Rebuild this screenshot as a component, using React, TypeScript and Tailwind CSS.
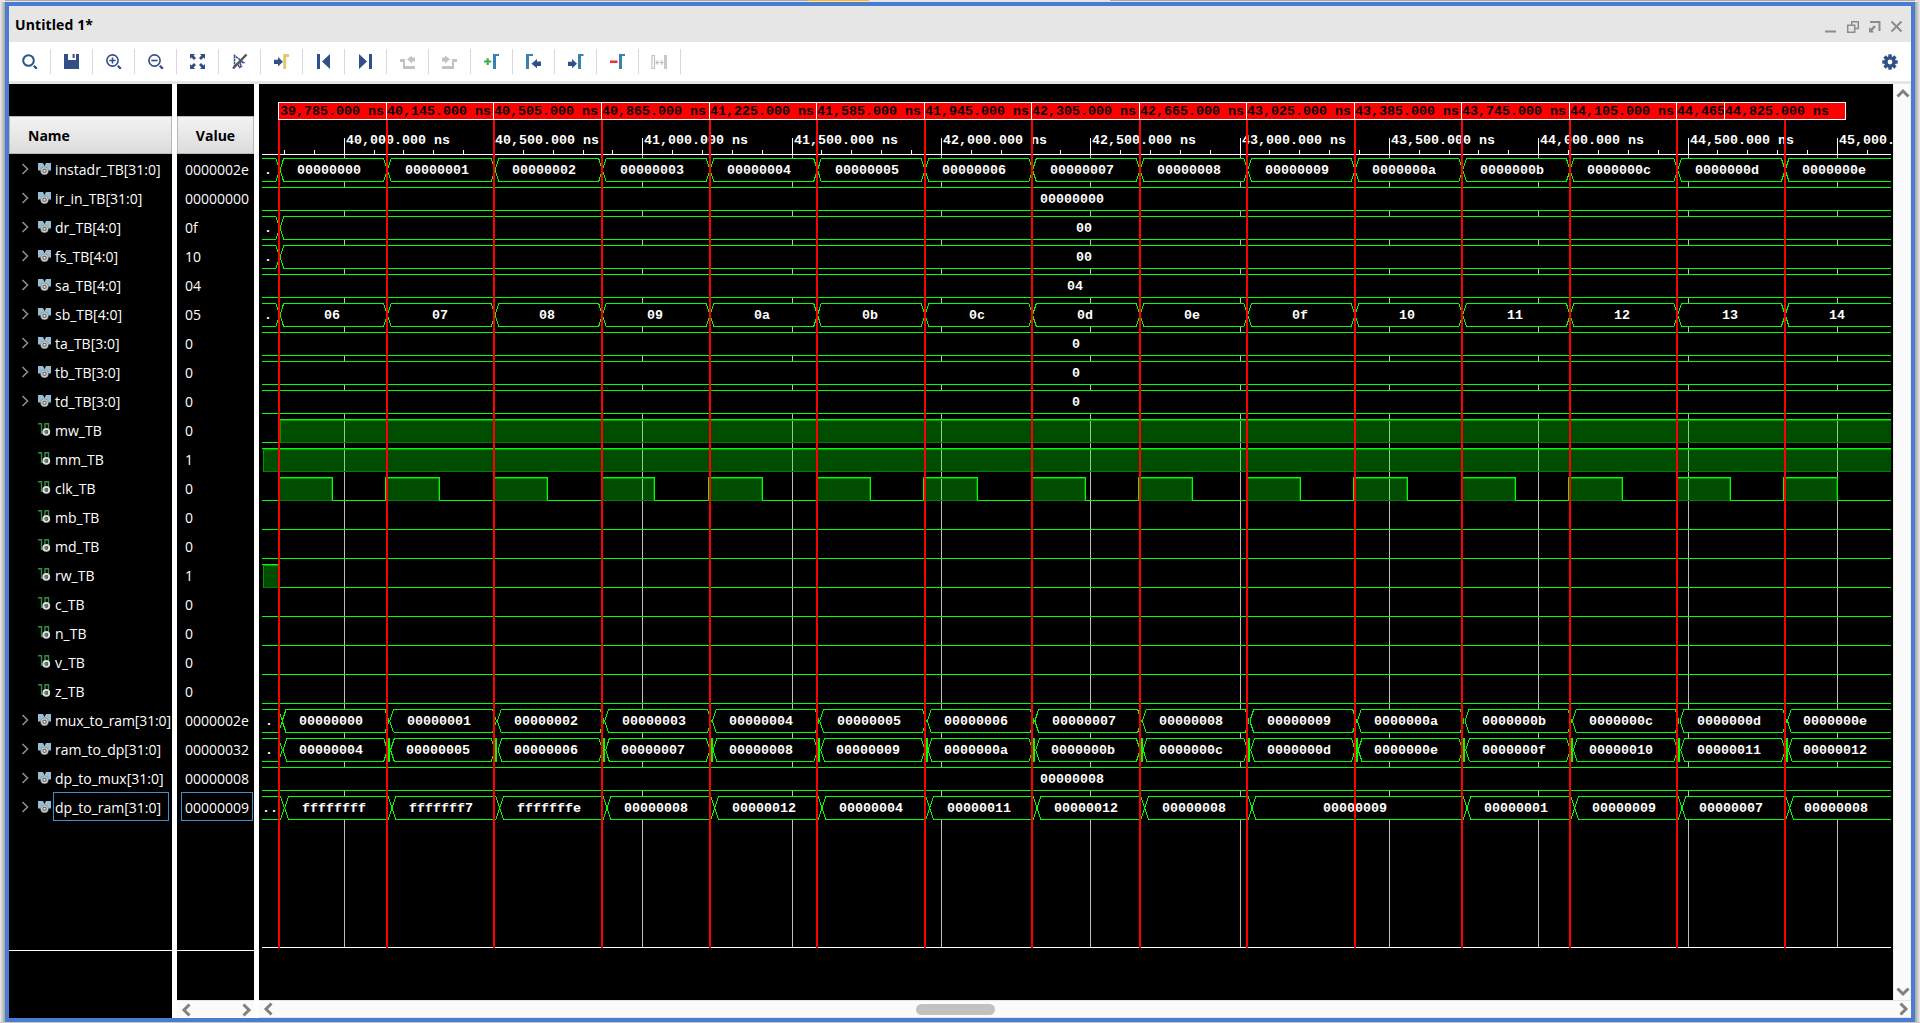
import React from "react";

const NAVY = "#334f87";
const GREEN = "#00ff00";

type Signal = { name: string; value: string; bus: boolean };

const signals: Signal[] = [
  { name: "instadr_TB[31:0]", value: "0000002e", bus: true },
  { name: "ir_in_TB[31:0]", value: "00000000", bus: true },
  { name: "dr_TB[4:0]", value: "0f", bus: true },
  { name: "fs_TB[4:0]", value: "10", bus: true },
  { name: "sa_TB[4:0]", value: "04", bus: true },
  { name: "sb_TB[4:0]", value: "05", bus: true },
  { name: "ta_TB[3:0]", value: "0", bus: true },
  { name: "tb_TB[3:0]", value: "0", bus: true },
  { name: "td_TB[3:0]", value: "0", bus: true },
  { name: "mw_TB", value: "0", bus: false },
  { name: "mm_TB", value: "1", bus: false },
  { name: "clk_TB", value: "0", bus: false },
  { name: "mb_TB", value: "0", bus: false },
  { name: "md_TB", value: "0", bus: false },
  { name: "rw_TB", value: "1", bus: false },
  { name: "c_TB", value: "0", bus: false },
  { name: "n_TB", value: "0", bus: false },
  { name: "v_TB", value: "0", bus: false },
  { name: "z_TB", value: "0", bus: false },
  { name: "mux_to_ram[31:0]", value: "0000002e", bus: true },
  { name: "ram_to_dp[31:0]", value: "00000032", bus: true },
  { name: "dp_to_mux[31:0]", value: "00000008", bus: true },
  { name: "dp_to_ram[31:0]", value: "00000009", bus: true },
];

/* ---------- toolbar icons (15 x 15) ---------- */

const Handle = () => <path d="M11 12.600l1.600-1.600 2.600 2.400v1.600h-1.800z" fill={NAVY} stroke="none" />;
const Corner = ({ c = "#3a80b0", x = 9 }: { c?: string; x?: number }) => (
  <path d={`M${x} 15V0h6v2h-3v13z`} fill={c} />
);

const icons: React.ReactNode[] = [
  <g fill="none" stroke={NAVY} strokeWidth="2">
    <circle cx="6.500" cy="6.500" r="5.300" />
    <Handle />
  </g>,
  <path d="M0 0h4v6h8V0h3v15H0zM8.600 0h2v4h-2z" fill={NAVY} />,
  <g fill="none" stroke={NAVY} strokeWidth="1.600">
    <circle cx="6.500" cy="6.500" r="5.600" />
    <path d="M3.400 6.500h6.200M6.500 3.400v6.200" />
    <Handle />
  </g>,
  <g fill="none" stroke={NAVY} strokeWidth="1.600">
    <circle cx="6.500" cy="6.500" r="5.600" />
    <path d="M3.400 6.500h6.200" />
    <Handle />
  </g>,
  <path
    d="M0 0h5L3.600 1.400 6 4 4 6 1.400 3.600 0 5zM15 0h-5l1.400 1.400L9 4l2 2 2.600-2.400L15 5zM0 15h5l-1.400-1.400L6 11 4 9l-2.600 2.400L0 10zM15 15h-5l1.400-1.400L9 11l2-2 2.600 2.400L15 10z"
    fill={NAVY}
  />,
  <g fill="none">
    <path d="M2.500 1.500v10l3-2 2 4 2-1-2-4h4z" stroke={NAVY} strokeWidth="1.500" strokeDasharray="2.500 .5" />
    <path d="M14.500 .5l-13.500 14" stroke="#555" strokeWidth="2.400" />
  </g>,
  <g>
    <path d="M0 5.700h4V3l5 4.800-5 4.700V10H0z" fill={NAVY} />
    <path d="M9.300 15V0H15v3h-3v12z" fill="#e3c766" />
  </g>,
  <path d="M1 0h3v15H1zM14 0v15L6 7.500z" fill={NAVY} />,
  <path d="M11 0h3v15h-3zM1 0v15l8-7.500z" fill={NAVY} />,
  <path d="M0 5h5v7h10v3H3V8H0zM7 5.300l5-3.800v2h3v4h-3v2z" fill="#c2c2c2" />,
  <path d="M15 5h-5v7H0v3h12V8h3zM8 5.300L3 1.500v2H0v4h3v2z" fill="#c2c2c2" />,
  <g>
    <path d="M2.600 4.200h2.200v2.400h2.400v2H4.800v2.400H2.600V8.600H0v-2h2.600z" fill="#3fae49" />
    <Corner />
  </g>,
  <g>
    <path d="M0 15V0h7v2H3v13z" fill="#3a80b0" />
    <path d="M15 7.500h-4V5l-5.500 4.700 5.500 4.500V12h4z" fill={NAVY} />
  </g>,
  <g>
    <path d="M0 7.800h4V5l5 4.700-5 4.500V12H0z" fill={NAVY} />
    <path d="M10 15V0h5.500v2H13v13z" fill="#3a80b0" />
  </g>,
  <g>
    <path d="M0 6.500h7.500V9H0z" fill="#ee2f36" />
    <Corner />
  </g>,
  <g fill="none" stroke="#c2c2c2">
    <path d="M0 1.500h2.500v13H0z" strokeWidth="1.200" />
    <path d="M12 1h3v14h-3z" fill="#c8c8c8" stroke="none" />
    <path d="M4.500 8.500h6M6 6.500l-2 2 2 2M9 6.500l2 2-2 2" strokeWidth="1.200" />
  </g>,
];

const Gear = () => (
  <svg width="16" height="16" viewBox="-8 -8 16 16" fill={NAVY}>
    {[0, 45, 90, 135].map((a) => (
      <rect key={a} x="-1.700" y="-7.700" width="3.400" height="15.400" transform={`rotate(${a})`} />
    ))}
    <circle r="5.800" />
    <circle r="2.400" fill="#fff" />
  </svg>
);

const Chevron = ({ d, c = "#808080", w = 3 }: { d: string; c?: string; w?: number }) => (
  <svg width="14" height="14" viewBox="0 0 14 14" fill="none" stroke={c} strokeWidth={w} className="shrink-0">
    <path d={d} />
  </svg>
);
const LEFT = "M9.500 1.500L4 7l5.500 5.500";
const RIGHT = "M4.500 1.500L10 7l-5.500 5.500";
const UP = "M1.500 9.500L7 4l5.500 5.500";
const DOWN = "M1.500 4.500L7 10l5.500-5.500";

const BusIcon = () => (
  <svg width="13" height="12" viewBox="0 0 13 12" className="shrink-0">
    <path d="M0 0h5l1.500 3L8 0h5v7.500H9V9H4V7.500H0z" fill="#96bdd2" />
    <circle cx="6.500" cy="7.800" r="3.900" fill="#d4d4d4" stroke="#5a6a74" strokeWidth=".5" />
    <circle cx="6.500" cy="7.800" r="1.700" fill="#e0e0e0" stroke="#666" strokeWidth="1.100" />
  </svg>
);
const WireIcon = () => (
  <svg width="13" height="13" viewBox="0 0 13 13" className="shrink-0">
    <path d="M0 .7h3.500v9.500h3.500V.7h3.500V6" fill="none" stroke="#2f8f45" strokeWidth="1.400" />
    <circle cx="8.300" cy="8.800" r="2.900" fill="none" stroke="#dcdcdc" strokeWidth="2" />
    <circle cx="8.300" cy="8.800" r="1.600" fill="#777" />
  </svg>
);

/* ---------- waveform ---------- */

const X0 = 262;
const X1 = 1891;
const markers = [278, 386, 493, 601, 709, 816, 924, 1031, 1139, 1246, 1354, 1461, 1569, 1676, 1784];
const markerLabels = [
  "39,785", "40,145", "40,505", "40,865", "41,225", "41,585", "41,945", "42,305",
  "42,665", "43,025", "43,385", "43,745", "44,105", "44,465", "44,825",
];
const clockRises = [278, 385, 493, 601, 708, 816, 923, 1031, 1138, 1246, 1353, 1461, 1568, 1676, 1783];
const majors = [
  "40,000", "40,500", "41,000", "41,500", "42,000", "42,500", "43,000", "43,500", "44,000", "44,500", "45,000",
];
const tickX = (n: number) => Math.floor(344.15 + 29.864 * n);
const top = (row: number) => 158 + 29 * row;

type Seg = { a: number; b: number; text: string; first?: boolean; last?: boolean };

const every = (start: number, labels: string[], endStart = start): Seg[] =>
  labels.map((text, i) => ({
    a: start + 107.52 * i,
    b: i === labels.length - 1 ? X1 : endStart + 107.52 * (i + 1),
    text,
    last: i === labels.length - 1,
  }));

const hex = (n: number, w: number) => n.toString(16).padStart(w, "0");
const counts = (from: number, w: number) => Array.from({ length: 15 }, (_, i) => hex(from + i, w));

const dpSegs: Seg[] = [
  ["ffffffff", 0, 1], ["fffffff7", 1, 2], ["fffffffe", 2, 3], ["00000008", 3, 4], ["00000012", 4, 5],
  ["00000004", 5, 6], ["00000011", 6, 7], ["00000012", 7, 8], ["00000008", 8, 9], ["00000009", 9, 11],
  ["00000001", 11, 12], ["00000009", 12, 13], ["00000007", 13, 14], ["00000008", 14, 15],
].map(([text, i, j]) => ({
  a: 284.6 + 107.5 * (i as number),
  b: j === 15 ? X1 : 284.6 + 107.5 * (j as number),
  text: text as string,
  last: j === 15,
}));

const whole = (text: string): Seg[] => [{ a: X0, b: X1, text, first: true, last: true }];
const afterStart = (text: string): Seg[] => [{ a: 280, b: X1, text, last: true }];

const busRows: { row: number; lead?: string; leadEnd?: number; segs: Seg[] }[] = [
  { row: 0, lead: ".", leadEnd: 279.7, segs: every(279.9, counts(0, 8)) },
  { row: 1, segs: whole("00000000") },
  { row: 2, lead: ".", leadEnd: 279.7, segs: afterStart("00") },
  { row: 3, lead: ".", leadEnd: 279.7, segs: afterStart("00") },
  { row: 4, segs: whole("04") },
  { row: 5, lead: ".", leadEnd: 279.7, segs: every(279.9, counts(6, 2)) },
  { row: 6, segs: whole("0") },
  { row: 7, segs: whole("0") },
  { row: 8, segs: whole("0") },
  { row: 19, lead: ".", leadEnd: 282.3, segs: every(282.2, counts(0, 8), 281.3) },
  { row: 20, lead: ".", leadEnd: 282.3, segs: every(283, counts(4, 8), 280) },
  { row: 21, segs: whole("00000008") },
  { row: 22, lead: "..", leadEnd: 284.3, segs: dpSegs },
];

const MONO = "'Liberation Mono', monospace";

function BusShape({ seg, row }: { seg: Seg; row: number }) {
  const t = top(row) + 0.5;
  const b = t + 23;
  const m = (t + b) / 2;
  const l = seg.a;
  const r = seg.b;
  const s = 3.8;
  const start = seg.first ? `M${l} ${b}M${l} ${t}` : `M${l + s} ${b}L${l} ${m}L${l + s} ${t}`;
  const d = seg.first
    ? `${start}H${r}M${l} ${b}H${r}`
    : seg.last
      ? `${start}H${r}M${l + s} ${b}H${r}`
      : `${start}H${r - s}L${r} ${m}L${r - s} ${b}H${l + s}`;
  const x = (l + r) / 2 - seg.text.length * 4.5 - 0.4;
  return (
    <>
      <path d={d} fill="none" stroke={GREEN} />
      <text x={Math.round(x)} y={top(row) + 16}>
        {seg.text}
      </text>
    </>
  );
}

function HighLevel({ row, from, to, leftEdge, pulse }: { row: number; from: number; to: number; leftEdge?: boolean; pulse?: boolean }) {
  const t = top(row);
  return (
    <g>
      <rect x={from} y={t} width={to - from} height="24" fill={GREEN} fillOpacity=".3" />
      <rect x={from} y={t + 1} width={to - from} height="1" fill="#00a000" />
      <rect x={from} y={t + 23} width={to - from} height="1" fill="#008000" />
      {leftEdge && <rect x={from} y={t + 1} width="1" height="23" fill="#009400" />}
      {pulse && <rect x={to - 2} y={t + 2} width="1" height="21" fill="#008000" />}
      {pulse && <path d={`M${from + 0.5} ${t + 24}V${t + 0.5}H${to - 0.5}V${t + 24}`} fill="none" stroke={GREEN} />}
      {!pulse && <rect x={Math.max(X0, from - 1)} y={t} width={to - from + 1} height="1" fill={GREEN} />}
    </g>
  );
}

const Low = ({ row, from = X0, to = X1 }: { row: number; from?: number; to?: number }) => (
  <rect x={from} y={top(row) + 23} width={to - from} height="1" fill={GREEN} />
);

function Waveform() {
  return (
    <svg
      width="1634"
      height="916"
      viewBox="259 84 1634 916"
      className="block bg-black"
      fontFamily={MONO}
      fontSize="13.333"
      fontWeight="700"
      fill="#fff"
      shapeRendering="crispEdges"
    >
      {majors.map((_, i) => (
        <rect key={i} x={tickX(i * 5)} y="155" width="1" height="792" fill="#c0c0c0" />
      ))}
      {busRows.map(({ row }) => (
        <rect key={row} x={X0} y={top(row)} width={X1 - X0} height="24" fill="#000" />
      ))}

      {/* time axis */}
      <rect x={X0} y="154" width={X1 - X0} height="1" />
      {Array.from({ length: 54 }, (_, k) => k - 2).map((n) => (
        <rect key={n} x={tickX(n)} y={n % 5 === 0 ? 138 : 150} width="1" height={n % 5 === 0 ? 17 : 4} />
      ))}
      {majors.map((m, i) => (
        <text key={m} x={tickX(i * 5) + 2} y="144" xmlSpace="preserve">
          {m + ".000 ns"}
        </text>
      ))}

      {/* buses */}
      {busRows.map(({ row, lead, leadEnd, segs }) => (
        <g key={row}>
          {lead && leadEnd && (
            <>
              <path
                d={`M${X0} ${top(row) + 0.5}H${leadEnd - 3.8}L${leadEnd} ${top(row) + 12}L${leadEnd - 3.8} ${top(row) + 23.5}H${X0}`}
                fill="none"
                stroke={GREEN}
              />
              <text x={lead.length > 1 ? 262 : row > 9 ? 265 : 264} y={top(row) + 16}>
                {lead}
              </text>
            </>
          )}
          {segs.map((s, i) => (
            <BusShape key={i} seg={s} row={row} />
          ))}
        </g>
      ))}
      {markers.slice(1).map((x) => (
        <rect key={x} x={x + 2} y={top(20)} width="2" height="24" fill={GREEN} />
      ))}

      {/* single-bit signals */}
      <Low row={9} to={279} />
      <HighLevel row={9} from={280} to={X1} leftEdge />
      <HighLevel row={10} from={263} to={X1} leftEdge />
      <Low row={11} />
      {clockRises.map((x, i) => (
        <HighLevel key={x} row={11} from={x} to={Math.floor(332.4 + 107.53 * i) + 1} pulse />
      ))}
      <Low row={12} />
      <Low row={13} />
      <HighLevel row={14} from={263} to={279} leftEdge />
      <Low row={14} from={280} />
      {[15, 16, 17, 18].map((r) => (
        <Low key={r} row={r} />
      ))}

      <rect x={X0} y="947" width={X1 - X0} height="1" />

      {/* markers */}
      {markers.map((x, i) => (
        <g key={x}>
          <rect x={x} y="119" width="2" height="829" fill="#f00" />
          <rect x={i === 14 ? 1724.5 : x + 0.5} y="102.500" width="121" height="17" fill="#f00" stroke="#fff" />
          <text x={(i === 14 ? 1724 : x) + (i === 0 ? 2 : 1)} y="115" fill="#000" xmlSpace="preserve">
            {markerLabels[i] + ".000 ns"}
          </text>
        </g>
      ))}
    </svg>
  );
}

/* ---------- page ---------- */

const HeaderCell = ({ children, className }: { children: string; className: string }) => (
  <div
    className={`mt-8 flex h-[38px] shrink-0 items-center border border-[#b8b8b8] bg-linear-to-b from-[#f3f3f3] to-[#dcdcdc] text-[14px] font-bold text-black ${className}`}
  >
    {children}
  </div>
);

export default function App() {
  return (
    <div className="flex h-[1023px] w-[1920px] flex-col overflow-hidden bg-[#e6e6e6] font-['Open_Sans','Noto_Sans',sans-serif] text-black">
      <div className="flex h-[2px] shrink-0 pr-[5px] pl-[5px]">
        <div className="h-px w-[804px] bg-[#a9a9a9]" />
        <div className="h-px w-[60px] bg-[#ffb900]" />
        <div className="h-px w-[241px]" />
        <div className="h-px flex-1 bg-[#a9a9a9]" />
      </div>
      <div className="flex h-[1020px] shrink-0">
        <div className="w-[5px] bg-linear-to-r from-[#ececec] to-[#a4a4a4]" />
        <div className="flex w-[1910px] flex-col border-4 border-[#4a7dcf] bg-white">
          <div className="flex h-9 shrink-0 items-center justify-between bg-[#e6e6e6] pr-[8px] pl-[6px]">
            <span className="pt-[1px] text-[14px] font-bold tracking-[0.1px]">Untitled 1*</span>
            <svg width="80" height="14" viewBox="0 0 80 14" fill="none" stroke="#8c8c8c" strokeWidth="1.500" className="mt-[5px]">
              <path d="M2 11.500h11" strokeWidth="2" />
              <path d="M24.700 5.200h7v7h-7zM28.700 5V1.700h6.600v6.800H32" />
              <path d="M47 2h9.500v9" strokeWidth="2" />
              <path d="M46 12.500V7l1.700 1.700 3.500-3.500 1.700 1.700-3.500 3.500 1.800 2.100z" fill="#8c8c8c" stroke="none" />
              <path d="M68.500 1.500l10 10M78.500 1.500l-10 10" strokeWidth="2" />
            </svg>
          </div>
          <div className="flex h-[39px] shrink-0 items-center">
            {icons.map((icon, i) => (
              <div key={i} className="flex h-[25px] w-[42px] items-center justify-center border-r border-[#d9d9d9]">
                <svg width="15" height="15" viewBox="0 0 15 15" className="overflow-visible">
                  {icon}
                </svg>
              </div>
            ))}
            <div className="mr-[13px] ml-auto">
              <Gear />
            </div>
          </div>
          <div className="h-[3px] shrink-0 bg-[#e6e6e6]" />
          <div className="flex h-[934px] shrink-0">
            {/* names */}
            <div className="flex w-[163px] flex-col overflow-hidden bg-black text-[14px] text-white">
              <HeaderCell className="pl-[18px]">Name</HeaderCell>
              {signals.map((s, i) => (
                <div key={s.name} className="flex h-[29px] shrink-0 items-center">
                  <div className="flex w-[29px] shrink-0 justify-center pl-[3px]">
                    {s.bus && <Chevron d="M4.500 2l5 5-5 5" c="#8c8c8c" w={1.6} />}
                  </div>
                  {s.bus ? <BusIcon /> : <WireIcon />}
                  <div
                    className={`ml-[2px] flex h-[29px] shrink-0 items-center border pl-[1px] whitespace-nowrap ${
                      i === 22 ? "w-[116px] border-[#3d8fd0]" : "border-transparent"
                    }`}
                  >
                    <span className={i === 19 ? "pt-[2px] tracking-[-0.12px]" : "pt-[2px]"}>{s.name}</span>
                  </div>
                </div>
              ))}
              <div className="mt-[129px] h-px shrink-0 bg-white" />
            </div>
            <div className="w-[5px]" />
            {/* values */}
            <div className="flex w-[77px] flex-col bg-black text-[14px] text-white">
              <HeaderCell className="justify-center">Value</HeaderCell>
              {signals.map((s, i) => (
                <div
                  key={s.name}
                  className={`mr-[1px] ml-1 flex h-[29px] shrink-0 items-center border pl-[3px] ${
                    i === 22 ? "border-[#3d8fd0]" : "border-transparent"
                  }`}
                >
                  <span className="pt-[2px]">{s.value}</span>
                </div>
              ))}
              <div className="mt-[129px] h-px shrink-0 bg-white" />
              <div className="mt-auto flex h-[18px] items-center justify-between border-t border-[#e6e6e6] bg-[#fbfbfb] pr-[1px] pl-[3px]">
                <Chevron d={LEFT} />
                <Chevron d={RIGHT} />
              </div>
            </div>
            <div className="w-[5px]" />
            {/* waveform */}
            <div className="flex w-[1652px] flex-col">
              <div className="flex h-[916px]">
                <Waveform />
                <div className="flex w-[18px] flex-col items-center justify-between border-x border-[#ececec] bg-[#fbfbfb] pt-[3px] pb-[2px] pl-[1px]">
                  <Chevron d={UP} />
                  <Chevron d={DOWN} />
                </div>
              </div>
              <div className="flex h-[18px] items-center border-y border-[#e6e6e6] bg-[#fbfbfb] pl-[3px]">
                <Chevron d={LEFT} />
                <div className="ml-[640px] h-[11px] w-[79px] rounded-full bg-[#c1c1c1]" />
                <div className="mr-[1px] ml-auto">
                  <Chevron d={RIGHT} />
                </div>
              </div>
            </div>
          </div>
        </div>
        <div className="w-[5px] bg-linear-to-r from-[#a4a4a4] to-[#ececec]" />
      </div>
      <div className="h-px bg-[#c8c8c8]" />
    </div>
  );
}
